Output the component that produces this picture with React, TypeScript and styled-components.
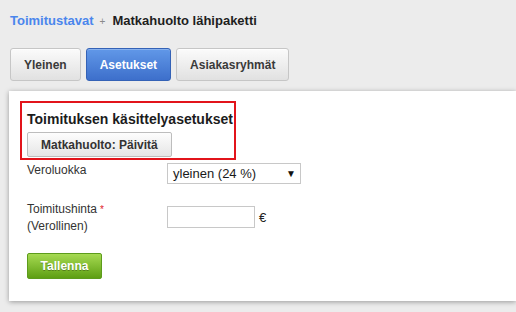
import React from "react";
import styled, { createGlobalStyle } from "styled-components";

const Global = createGlobalStyle`
  html, body { margin: 0; padding: 0; }
  body {
    background: #ececec;
    font-family: "Liberation Sans", Arial, sans-serif;
    color: #333;
    width: 516px;
    height: 312px;
    overflow: hidden;
  }
`;

const Page = styled.div`
  padding: 13px 0 0 10px;
`;

const Breadcrumb = styled.div`
  display: flex;
  align-items: baseline;
  font-size: 13px;
  line-height: 16px;
  font-weight: bold;
`;

const CrumbLink = styled.a`
  color: #4a86ec;
  font-weight: bold;
  text-decoration: none;
`;

const CrumbSep = styled.span`
  color: #8a8a8a;
  font-size: 10px;
  font-weight: normal;
  margin: 0 7px 0 6px;
`;

const CrumbCurrent = styled.span`
  color: #1e1e1e;
  font-weight: bold;
`;

const Tabs = styled.div`
  display: flex;
  gap: 5px;
  margin-top: 18px;
`;

const Tab = styled.button<{ $active?: boolean }>`
  box-sizing: border-box;
  height: 33px;
  margin: 0;
  padding: 0 13px;
  border-radius: 3px;
  font-family: inherit;
  font-size: 12px;
  font-weight: bold;
  cursor: pointer;
  border: 1px solid ${(p) => (p.$active ? "#3462b6" : "#c6c6c6")};
  color: ${(p) => (p.$active ? "#fff" : "#3a3a3a")};
  background: ${(p) =>
    p.$active
      ? "linear-gradient(#6198e8, #3d6fcb)"
      : "linear-gradient(#fbfbfb, #e1e1e1)"};
  box-shadow: inset 0 1px 0 rgba(255, 255, 255, ${(p) => (p.$active ? 0.25 : 0.8)});
`;

const Panel = styled.div`
  margin: 10px 0 0 -1px;
  background: #fff;
  box-shadow: 0 1px 5px rgba(0, 0, 0, 0.35);
  padding: 10px 0 22px 11px;
`;

const Highlight = styled.section`
  box-sizing: border-box;
  width: 216px;
  border: 2px solid #e2141b;
  padding: 7px 0 1px 5px;
`;

const Heading = styled.h2`
  margin: 0;
  font-size: 14px;
  line-height: 18px;
  font-weight: bold;
  color: #1c1c1c;
  white-space: nowrap;
`;

const UpdateButton = styled.button`
  box-sizing: border-box;
  margin-top: 4px;
  height: 25px;
  padding: 0 13px;
  border: 1px solid #bdbdbd;
  border-radius: 2px;
  background: linear-gradient(#fdfdfd, #e6e6e6);
  font-family: inherit;
  font-size: 12px;
  font-weight: bold;
  color: #333;
  display: block;
`;

const FormRow = styled.div<{ $gap: number }>`
  display: flex;
  align-items: flex-start;
  margin-top: ${(p) => p.$gap}px;
  padding-left: 7px;
`;

const Label = styled.label`
  width: 140px;
  font-size: 12px;
  line-height: 17px;
  color: #333;
`;

const Required = styled.span`
  color: #e0202a;
  font-size: 10px;
  vertical-align: top;
  margin-left: 3px;
`;

const SelectBox = styled.div`
  box-sizing: border-box;
  width: 134px;
  height: 21px;
  margin-top: 1px;
  border: 1px solid #c8c8c8;
  display: flex;
  align-items: center;
  justify-content: space-between;
  padding: 0 4px 0 5px;
  font-size: 13px;
  color: #1a1a1a;
`;

const Arrow = styled.span`
  font-size: 10px;
  color: #111;
`;

const Field = styled.div`
  display: flex;
  align-items: center;
  gap: 4px;
  margin-top: 5px;
  font-size: 13px;
  color: #222;
`;

const TextInput = styled.input`
  box-sizing: border-box;
  width: 88px;
  height: 22px;
  border: 1px solid #c8c8c8;
  margin: 0;
  padding: 0 4px;
  font-family: inherit;
  font-size: 13px;
`;

const SaveButton = styled.button`
  box-sizing: border-box;
  margin: 18px 0 0 7px;
  width: 75px;
  height: 26px;
  border: 1px solid #5d9c1c;
  border-radius: 2px;
  background: linear-gradient(#a6da52, #5e9f13);
  color: #fff;
  font-family: inherit;
  font-size: 12px;
  font-weight: bold;
  text-shadow: 0 1px 0 rgba(0, 0, 0, 0.3);
  display: block;
`;

export default function App() {
  return (
    <>
      <Global />
      <Page>
        <Breadcrumb>
          <CrumbLink href="#">Toimitustavat</CrumbLink>
          <CrumbSep>+</CrumbSep>
          <CrumbCurrent>Matkahuolto lähipaketti</CrumbCurrent>
        </Breadcrumb>
        <Tabs>
          <Tab>Yleinen</Tab>
          <Tab $active>Asetukset</Tab>
          <Tab>Asiakasryhmät</Tab>
        </Tabs>
        <Panel>
          <Highlight>
            <Heading>Toimituksen käsittelyasetukset</Heading>
            <UpdateButton>Matkahuolto: Päivitä</UpdateButton>
          </Highlight>
          <FormRow $gap={2}>
            <Label>Veroluokka</Label>
            <SelectBox>
              <span>yleinen (24 %)</span>
              <Arrow>▼</Arrow>
            </SelectBox>
          </FormRow>
          <FormRow $gap={17}>
            <Label>
              Toimitushinta<Required>*</Required>
              <br />
              (Verollinen)
            </Label>
            <Field>
              <TextInput type="text" />
              <span>€</span>
            </Field>
          </FormRow>
          <SaveButton>Tallenna</SaveButton>
        </Panel>
      </Page>
    </>
  );
}
